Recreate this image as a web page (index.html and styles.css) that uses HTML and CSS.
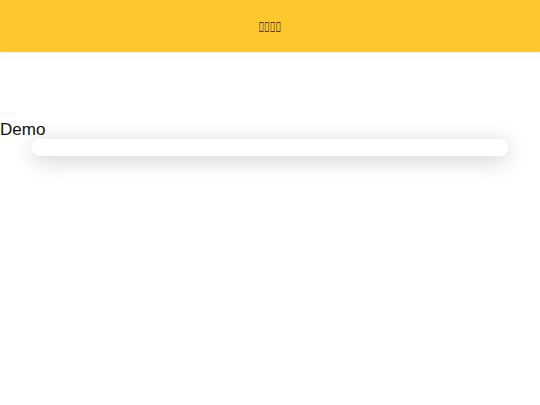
FILE: index.html
```html
<!DOCTYPE html>
<html>
<head>
<meta charset="utf-8">
<link rel="stylesheet" href="styles.css">
</head>
<body>
<header class="topbar"><span class="title">&#xE000;&#xE001;&#xE002;&#xE003;</span></header>
<main class="content">
  <h2 class="label">Demo</h2>
  <div class="card"></div>
</main>
</body>
</html>
```
FILE: styles.css
```css
html, body {
  margin: 0;
  padding: 0;
  background: #ffffff;
  font-family: "Liberation Sans", Arial, sans-serif;
}
body {
  min-height: 100vh;
}
.topbar {
  height: 52px;
  background: #ffc72e;
  display: flex;
  align-items: center;
  justify-content: center;
  box-shadow: 0 1px 2px rgba(0, 0, 0, 0.06);
}
.title {
  display: inline-block;
  font-family: "Noto Sans", sans-serif;
  font-size: 14px;
  color: #222;
  transform: scaleX(0.68);
}
.content {
  padding-top: 69px;
  padding-bottom: 40px;
}
.label {
  margin: 0;
  font-size: 17px;
  font-weight: normal;
  color: #111;
  line-height: 18px;
}
.card {
  margin: 0 32px;
  height: 17px;
  background: #fff;
  border-radius: 8px;
  box-shadow: 0 4px 22px rgba(0, 0, 0, 0.2);
}
```
